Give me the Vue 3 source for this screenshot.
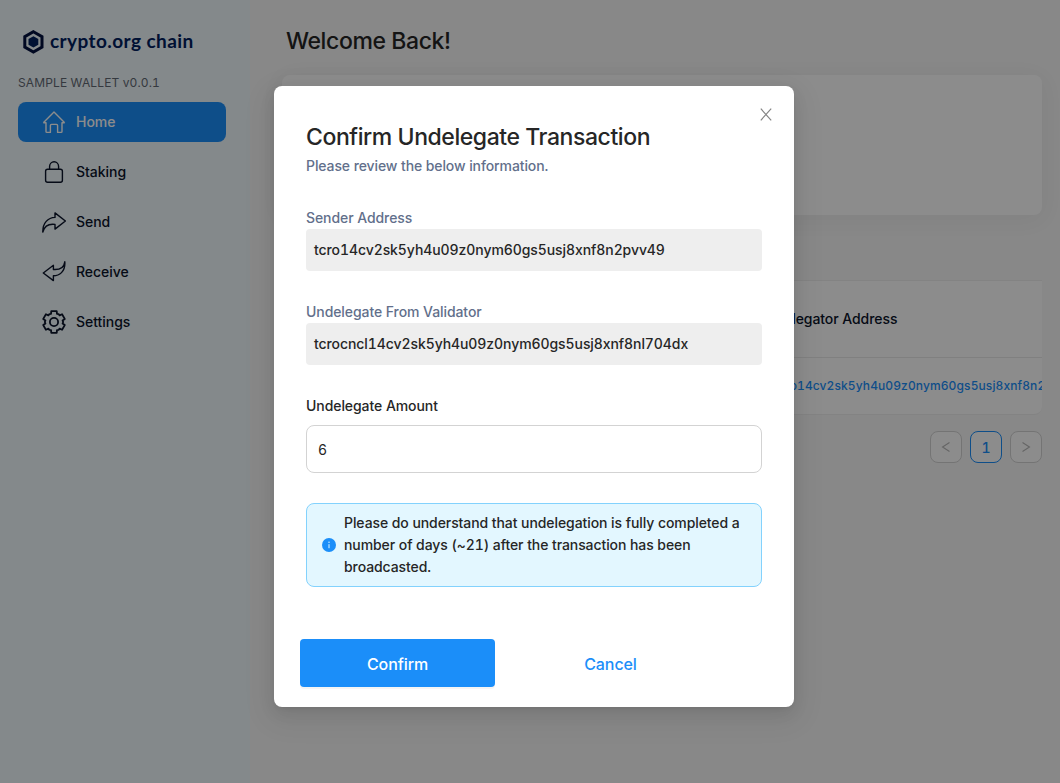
<script setup>
const items = [
  { name: 'Home', active: true, d: 'M1.3 12.7 12 2l10.7 10.7M1.3 12.7H4v8.8q0 .9.9.9h3.5v-6.9q0-1.1 1.1-1.1h5q1.1 0 1.1 1.1v6.9h3.5q.9 0 .9-.9v-8.8h2.7' },
  { name: 'Staking', d: 'M5.6 9.2h12.8q2 0 2 2v9.1q0 2-2 2H5.6q-2 0-2-2v-9.1q0-2 2-2zM7.6 9V6.5a4.5 4.7 0 0 1 9 0V9' },
  { name: 'Send', d: 'M.8 22C.6 13 6 7.6 13 7.4V2.9L23.4 11 13 19.1v-4.7C7 13.6 2.6 15.5.8 22z' },
  { name: 'Receive', d: 'M1.3 13 11.4 5.3v4.2C17 9.9 22 8 22.8 1.8 23.6 12 17 15.8 11.4 15.8v4.8z' },
  { name: 'Settings', gear: true, d: gear() },
]

function gear() {
  const pts = []
  const add = (r, deg) => {
    const a = ((deg - 90) * Math.PI) / 180
    pts.push(`${(12 + r * Math.cos(a)).toFixed(2)} ${(12 + r * Math.sin(a)).toFixed(2)}`)
  }
  for (let i = 0; i < 6; i++) {
    add(8.7, i * 60 - 20)
    add(11.2, i * 60 - 14)
    add(11.2, i * 60 + 14)
    add(8.7, i * 60 + 20)
    add(9.2, i * 60 + 30)
  }
  return `M${pts.join('L')}Z`
}

const fields = [
  { label: 'Sender Address', value: 'tcro14cv2sk5yh4u09z0nym60gs5usj8xnf8n2pvv49' },
  { label: 'Undelegate From Validator', value: 'tcrocncl14cv2sk5yh4u09z0nym60gs5usj8xnf8nl704dx' },
]
</script>

<template>
  <div class="app">
    <aside class="side">
      <div class="logo">
        <svg width="22" height="24" viewBox="0 0 22 24">
          <path d="M11.4 1.7 20 6.7V17.1L11.4 22.1 2.8 17.1V6.7Z" fill="none" stroke="#03113f" stroke-width="3" />
          <path d="M11.4 6.3 16.3 9.1V14.7L11.4 17.5 6.5 14.7V9.1Z" fill="#00205d" />
        </svg>
        <span class="brand">crypto.org chain</span>
      </div>
      <div class="version">SAMPLE WALLET v0.0.1</div>
      <nav>
        <a v-for="i in items" :key="i.name" class="item" :class="{ active: i.active }">
          <svg width="24" height="24" viewBox="0 0 24 24" fill="none" stroke="currentColor" stroke-linejoin="round" :stroke-width="i.gear ? 1.8 : 1.4">
            <path :d="i.d" />
            <circle v-if="i.gear" cx="12" cy="12" r="4.1" />
          </svg>
          <span>{{ i.name }}</span>
        </a>
      </nav>
    </aside>
    <main class="main">
      <h1>Welcome Back!</h1>
      <section class="card"></section>
      <section class="table">
        <div class="row head">Delegator Address</div>
        <div class="row link">tcro14cv2sk5yh4u09z0nym60gs5usj8xnf8n2pvv49</div>
      </section>
      <div class="pager">
        <span class="page"><svg width="12" height="12" viewBox="0 0 12 12"><path d="M9.5 1.5 2.5 6l7 4.5" /></svg></span>
        <span class="page on">1</span>
        <span class="page"><svg width="12" height="12" viewBox="0 0 12 12"><path d="M2.5 1.5l7 4.5-7 4.5" /></svg></span>
      </div>
    </main>

    <div class="mask">
      <div class="modal">
        <svg class="close" width="12" height="13" viewBox="0 0 12 13"><path d="M.8.7 11.2 12.3M11.2.7.8 12.3" /></svg>
        <h2>Confirm Undelegate Transaction</h2>
        <p class="desc">Please review the below information.</p>
        <div v-for="f in fields" :key="f.label" class="field">
          <div class="label">{{ f.label }}</div>
          <div class="value">{{ f.value }}</div>
        </div>
        <div class="amount-label">Undelegate Amount</div>
        <div class="input">6</div>
        <div class="alert">
          <svg width="14" height="14" viewBox="0 0 14 14">
            <circle cx="7" cy="7" r="7" fill="#1b8ef9" />
            <path d="M7 6.2v4" stroke="#e3f7ff" stroke-width="1" />
            <circle cx="7" cy="4.3" r=".7" fill="#e3f7ff" />
          </svg>
          <p>Please do understand that undelegation is fully completed a number of days (~21) after the transaction has been broadcasted.</p>
        </div>
        <div class="actions">
          <button class="confirm">Confirm</button>
          <button class="cancel">Cancel</button>
        </div>
      </div>
    </div>
  </div>
</template>

<style>
body { margin: 0; overflow: hidden; }
</style>

<style scoped>
* { box-sizing: border-box; }
.app {
  position: relative;
  display: flex;
  width: 1060px;
  height: 783px;
  overflow: hidden;
  background: #f7f7f7;
  font-family: Inter, sans-serif;
  font-weight: 500;
  font-size: 14px;
  font-variant-numeric: tabular-nums;
  color: #0b142a;
}
h1, h2, p { margin: 0; font-weight: 500; }
.side { width: 250px; flex: none; padding: 29px 24px 0 18px; background: #f0f9fd; }
.logo { display: flex; align-items: center; height: 25px; padding-left: 4px; }
.brand { margin: -2px 0 0 6px; font: 700 19px/24px Lato, sans-serif; letter-spacing: .42px; color: #00205d; white-space: nowrap; }
.version { margin-top: 20px; font-size: 12px; line-height: 18px; font-weight: 400; letter-spacing: .13px; color: #626973; }
nav { display: flex; flex-direction: column; gap: 10px; margin-top: 10px; }
.item { display: flex; align-items: center; height: 40px; padding-left: 24px; border-radius: 8px; }
.item span { margin: -1px 0 0 10px; letter-spacing: -.03px; }
.active { background: #1b8ef9; color: #fff; }
.main { flex: 1; min-width: 0; padding: 22px 18px 0 32px; }
h1 { padding-left: 4px; font-size: 23px; line-height: 38px; letter-spacing: -.4px; color: #262626; }
.card { height: 140px; margin-top: 15px; border-radius: 8px; background: #fff; box-shadow: 0 4px 24px rgba(0, 0, 0, .05); }
.table { margin-top: 65px; overflow: hidden; border-top: 1px solid #eee; border-bottom: 1px solid #eee; border-radius: 0 0 8px 8px; background: #fff; }
.row { padding-left: 492px; white-space: nowrap; }
.head { height: 77px; line-height: 76px; letter-spacing: -.07px; border-bottom: 1px solid #eaeaea; }
.link { height: 56px; line-height: 55px; font-size: 12px; letter-spacing: .11px; color: #1b8ef9; }
.pager { display: flex; justify-content: flex-end; gap: 8px; margin-top: 16px; }
.page { display: flex; align-items: center; justify-content: center; width: 32px; height: 32px; border: 1px solid #d4d4d4; border-radius: 8px; background: #fff; }
.page svg { fill: none; stroke: #b8b8b8; stroke-width: 1.1; }
.on { border-color: #1b8ef9; color: #1b8ef9; }
.mask { position: absolute; inset: 0; display: flex; align-items: flex-start; padding: 86px 0 0 274px; background: rgba(0, 0, 0, .45); }
.modal {
  position: relative;
  width: 520px;
  height: 621px;
  padding: 32px 32px 0;
  border-radius: 8px;
  background: #fff;
  color: #262626;
  box-shadow: 0 3px 6px -4px rgba(0, 0, 0, .12), 0 6px 16px rgba(0, 0, 0, .08), 0 9px 28px 8px rgba(0, 0, 0, .05);
}
.close { position: absolute; top: 22px; right: 22px; fill: none; stroke: #858585; stroke-width: 1.2; }
h2 { font-size: 23px; line-height: 38px; letter-spacing: -.43px; white-space: nowrap; }
.desc { line-height: 22px; margin-bottom: 30px; margin-top: -1px; letter-spacing: -.1px; color: #626f8b; }
.field { margin-bottom: 30px; }
.label { line-height: 22px; letter-spacing: -.08px; color: #626f8b; }
.value { height: 42px; padding: 0 8px; line-height: 42px; letter-spacing: -.08px; border-radius: 4px; background: #eee; }
.amount-label { line-height: 22px; letter-spacing: -.07px; }
.input { height: 48px; margin-top: 8px; padding: 0 11px; line-height: 48px; border: 1px solid #d3d3d3; border-radius: 8px; font-weight: 400; }
.alert { display: flex; align-items: center; height: 84px; margin-top: 30px; padding: 0 15px; border: 1px solid #83d2fd; border-radius: 8px; background: #e3f7ff; }
.alert svg { flex: none; margin-right: 8px; }
.alert p { line-height: 22px; letter-spacing: -.08px; }
.actions { display: flex; gap: 18px; margin: 52px 0 0 -6px; }
button { height: 48px; padding: 2px 0 0; border: 0; border-radius: 4px; font: 500 16px Inter, sans-serif; letter-spacing: -.1px; }
.confirm { width: 195px; background: #1b8ef9; color: #fff; box-shadow: 0 2px 0 rgba(0, 0, 0, .04); }
.cancel { width: 195px; background: none; color: #1b8ef9; }
</style>
